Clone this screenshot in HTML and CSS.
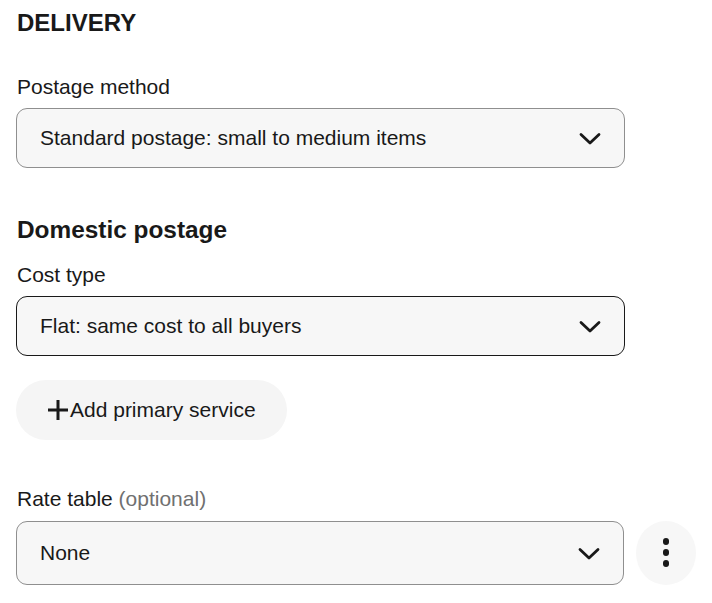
FILE: index.html
```html
<!DOCTYPE html>
<html>
<head>
<meta charset="utf-8">
<link rel="stylesheet" href="styles.css">
</head>
<body>
<main class="page">
  <h1 class="title">DELIVERY</h1>

  <div class="label label-first">Postage method</div>
  <div class="select">
    <span class="select-text">Standard postage: small to medium items</span>
    <svg class="chev" width="22" height="14" viewBox="0 0 22 14"><polyline points="2,2.5 11,11 20,2.5" fill="none" stroke="#191919" stroke-width="2.8" stroke-linecap="round" stroke-linejoin="round"/></svg>
  </div>

  <h2 class="subtitle">Domestic postage</h2>
  <div class="label label-sub">Cost type</div>
  <div class="select select-dark">
    <span class="select-text">Flat: same cost to all buyers</span>
    <svg class="chev" width="22" height="14" viewBox="0 0 22 14"><polyline points="2,2.5 11,11 20,2.5" fill="none" stroke="#191919" stroke-width="2.8" stroke-linecap="round" stroke-linejoin="round"/></svg>
  </div>

  <button class="add-btn">
    <svg class="plus" width="22" height="22" viewBox="0 0 22 22"><path d="M11 1 V21 M1 11 H21" stroke="#191919" stroke-width="3" fill="none"/></svg>
    <span>Add primary service</span>
  </button>

  <div class="label label-rate">Rate table <span class="muted">(optional)</span></div>
  <div class="rate-row">
    <div class="select select-tall">
      <span class="select-text">None</span>
      <svg class="chev" width="22" height="14" viewBox="0 0 22 14"><polyline points="2,2.5 11,11 20,2.5" fill="none" stroke="#191919" stroke-width="2.8" stroke-linecap="round" stroke-linejoin="round"/></svg>
    </div>
    <button class="kebab" aria-label="More">
      <span class="dot"></span><span class="dot"></span><span class="dot"></span>
    </button>
  </div>
</main>
</body>
</html>
```

FILE: styles.css
```css
html, body {
  margin: 0;
  padding: 0;
  background: #ffffff;
}
body {
  font-family: "Liberation Sans", Arial, sans-serif;
  color: #191919;
  font-size: 21px;
}
.page {
  padding: 9px 0 0 16px;
  width: 696px;
  box-sizing: border-box;
}
.title {
  margin: 0;
  font-size: 24px;
  line-height: 28px;
  font-weight: 700;
  padding-left: 1px;
}
.label {
  font-size: 21px;
  line-height: 24px;
  padding-left: 1px;
}
.label-first { margin-top: 38px; }
.label-sub { margin-top: 19px; }
.label-rate { margin-top: 47px; }
.muted { color: #707070; }
.select {
  box-sizing: border-box;
  width: 609px;
  height: 60px;
  margin-top: 9px;
  border: 1px solid #8f8f8f;
  border-radius: 11px;
  background: #f7f7f7;
  display: flex;
  align-items: center;
  justify-content: space-between;
  padding: 0 23px 0 23px;
}
.select-dark { border-color: #191919; }
.select-tall { height: 64px; margin-top: 0; }
.select-text { line-height: 24px; }
.chev { display: block; margin-top: 1px; }
.subtitle {
  margin: 48px 0 0 0;
  font-size: 24.4px;
  line-height: 28px;
  font-weight: 700;
  padding-left: 1px;
}
.add-btn {
  margin-top: 24px;
  height: 60px;
  border: none;
  border-radius: 30px;
  background: #f5f5f5;
  color: #191919;
  font-family: inherit;
  font-size: 21px;
  display: flex;
  align-items: center;
  padding: 0 31px 0 31px;
  gap: 1px;
}
.plus { display: block; }
.rate-row {
  margin-top: 10px;
  display: flex;
  align-items: center;
  gap: 12px;
}
.kebab {
  width: 60px;
  height: 64px;
  border-radius: 50%;
  border: none;
  background: #f7f7f7;
  display: flex;
  flex-direction: column;
  align-items: center;
  justify-content: center;
  gap: 4.5px;
  padding: 0;
  margin-top: -1px;
}
.dot {
  width: 6.5px;
  height: 6.5px;
  border-radius: 50%;
  background: #191919;
  display: block;
}
```
